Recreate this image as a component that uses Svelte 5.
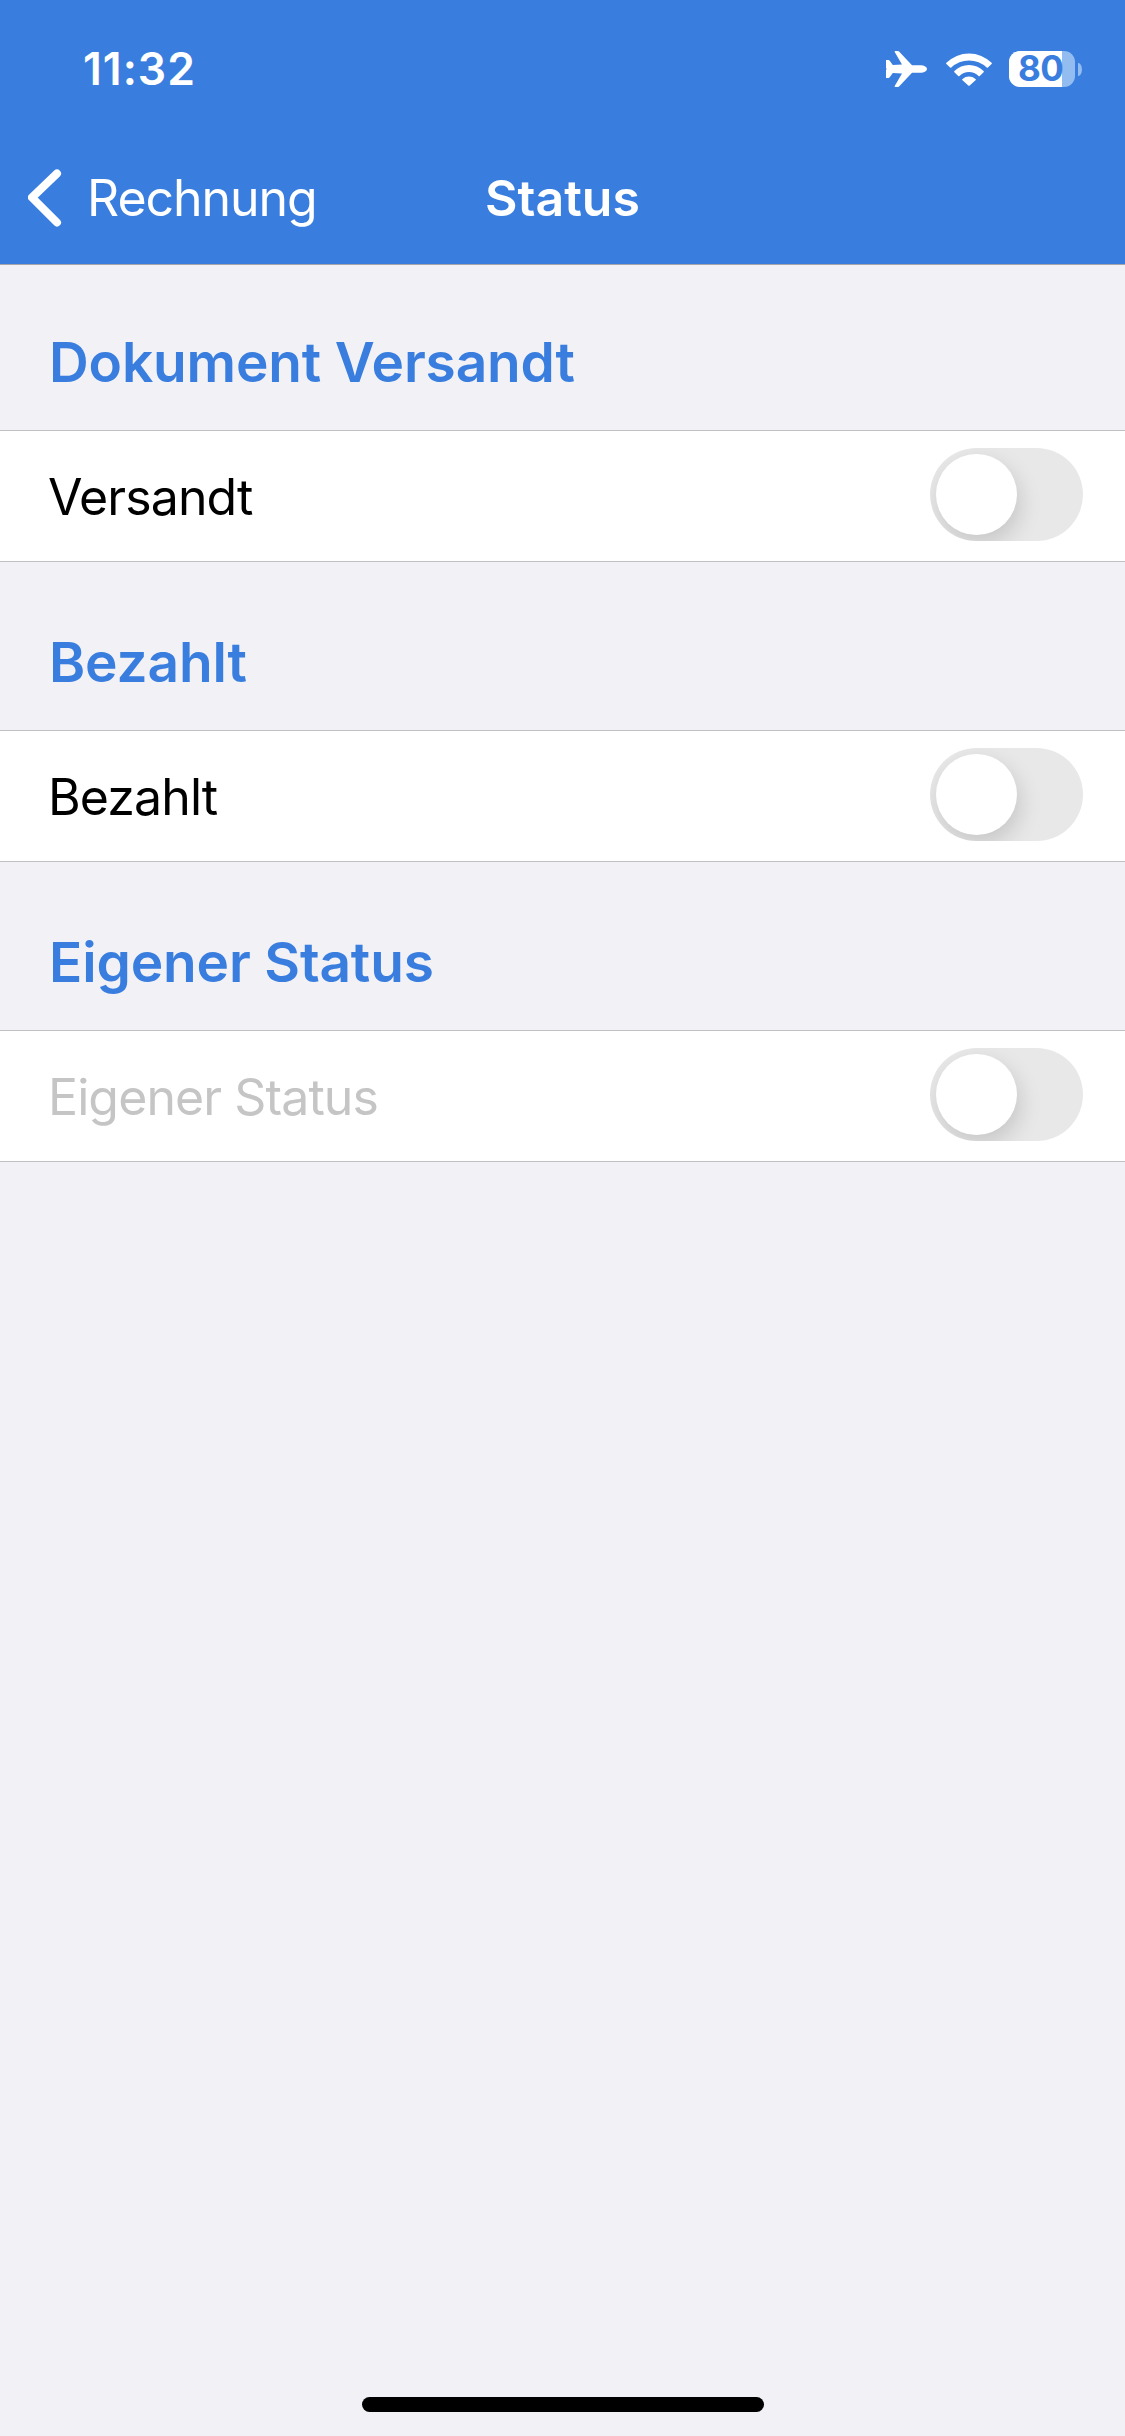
<script lang="ts">
  interface Section {
    id: string;
    title: string;
    label: string;
    placeholder?: boolean;
    on: boolean;
  }

  let sections = $state<Section[]>([
    { id: 'sent', title: 'Dokument Versandt', label: 'Versandt', on: false },
    { id: 'paid', title: 'Bezahlt', label: 'Bezahlt', on: false },
    { id: 'custom', title: 'Eigener Status', label: 'Eigener Status', placeholder: true, on: false },
  ]);

  const battery = 80;
</script>

<div class="screen">
  <header class="top">
    <div class="statusbar">
      <span class="statusbar__time">11:32</span>
      <div class="statusbar__icons">
        <svg class="plane" viewBox="0 0 41 36" aria-hidden="true">
          <path
            d="M0 9h2.4q.8 0 1.3.7L6.8 14L16 13.6L8.7.9Q8.4 0 9.3 0h2.6q.8 0 1.4.7L26 14.2H35.5Q41 15.2 41 18T35.5 21.8H26L13.3 35.3q-.6.7-1.4.7H9.3q-.9 0-.6-.9L16 22.4L6.8 22L3.7 26.3q-.5.7-1.3.7H0V18.8L.8 18L0 17.2Z"
          />
        </svg>
        <svg class="wifi" viewBox="0 0 46 33" aria-hidden="true">
          <path d="M.4 9.8a32 32 0 0 1 45.2 0q.6.6 0 1.2l-3.7 3.6q-.6.5-1.2 0a25.4 25.4 0 0 0-35.4 0q-.6.5-1.2 0L.4 11q-.6-.6 0-1.2Z" />
          <path d="M8.4 18a20.8 20.8 0 0 1 29.2 0q.6.6 0 1.2l-3.8 3.7q-.6.5-1.2 0a14 14 0 0 0-19.2 0q-.6.5-1.2 0l-3.8-3.7q-.6-.6 0-1.2Z" />
          <path d="M16.5 26a9.8 9.8 0 0 1 13 0q.7.7 0 1.3l-5.8 5.3q-.7.7-1.4 0l-5.8-5.3q-.7-.6 0-1.3Z" />
        </svg>
        <div class="battery">
          <div class="battery__body">
            <div class="battery__level" style="width: {battery}%"></div>
            <span class="battery__text">{battery}</span>
          </div>
          <div class="battery__cap"></div>
        </div>
      </div>
    </div>

    <nav class="navbar">
      <button type="button" class="navbar__back">
        <svg viewBox="0 0 34 58" aria-hidden="true">
          <path d="M29 4.5L4 28.5L29 53.5" />
        </svg>
        <span>Rechnung</span>
      </button>
      <h1 class="navbar__title">Status</h1>
    </nav>
  </header>

  <main class="list">
    {#each sections as section (section.id)}
      <section class="group">
        <h2 class="group__title">{section.title}</h2>
        <div class="row">
          <span class="row__label" class:row__label--placeholder={section.placeholder}>
            {section.label}
          </span>
          <button
            type="button"
            class="toggle"
            class:toggle--on={section.on}
            role="switch"
            aria-checked={section.on}
            aria-label={section.label}
            onclick={() => (section.on = !section.on)}
          >
            <span class="toggle__thumb"></span>
          </button>
        </div>
      </section>
    {/each}
  </main>

  <div class="home-indicator"></div>
</div>

<style>
  :global(body) {
    margin: 0;
    background: #f2f1f6;
  }

  .screen {
    --blue: #397ede;
    box-sizing: border-box;
    display: flex;
    flex-direction: column;
    width: 1125px;
    height: 2436px;
    background: #f2f1f6;
    font-family: Inter, 'Liberation Sans', sans-serif;
    color: #000;
  }

  button {
    margin: 0;
    padding: 0;
    border: 0;
    background: none;
    font: inherit;
    color: inherit;
  }

  .top {
    box-sizing: border-box;
    flex: none;
    height: 265px;
    background: var(--blue);
    border-bottom: 1px solid #a5a6ab;
    color: #fff;
  }

  .statusbar {
    box-sizing: border-box;
    display: flex;
    justify-content: space-between;
    height: 132px;
    padding: 39px 43px 0 83px;
  }

  .statusbar__time {
    font-size: 44.5px;
    font-weight: 600;
    line-height: 60px;
    letter-spacing: 1px;
  }

  .statusbar__icons {
    display: flex;
    align-items: center;
    height: 60px;
  }

  .statusbar__icons svg {
    fill: currentColor;
  }

  .plane {
    width: 41px;
    height: 36px;
    margin-right: 19px;
  }

  .wifi {
    width: 46px;
    height: 33px;
    margin-right: 17px;
  }

  .battery {
    display: flex;
    align-items: center;
    gap: 3px;
  }

  .battery__body {
    position: relative;
    width: 66px;
    height: 36px;
    border-radius: 11px;
    background: #93bdf0;
  }

  .battery__level {
    height: 100%;
    border-radius: 11px 0 0 11px;
    background: #fff;
  }

  .battery__text {
    position: absolute;
    top: -5px;
    left: 9px;
    font-size: 35px;
    font-weight: 700;
    line-height: 44px;
    letter-spacing: -0.5px;
    color: var(--blue);
  }

  .battery__cap {
    width: 4px;
    height: 13px;
    border-radius: 0 4px 4px 0 / 0 7px 7px 0;
    background: #93bdf0;
  }

  .navbar {
    display: grid;
    grid-template-columns: 1fr auto 1fr;
    align-items: center;
    height: 132px;
  }

  .navbar__back {
    display: flex;
    align-items: center;
    gap: 25px;
    padding-left: 28px;
    font-size: 50px;
    line-height: 60px;
    letter-spacing: -1.05px;
  }

  .navbar__back svg {
    width: 34px;
    height: 58px;
    fill: none;
    stroke: currentColor;
    stroke-width: 8;
    stroke-linecap: round;
    stroke-linejoin: round;
  }

  .navbar__title {
    margin: 0;
    font-size: 50px;
    font-weight: 600;
    line-height: 60px;
  }

  .list {
    flex: 1;
  }

  .group__title {
    box-sizing: border-box;
    height: 168px;
    margin: 0;
    padding: 68px 0 0 49px;
    font-size: 55px;
    font-weight: 600;
    line-height: 64px;
    letter-spacing: -0.15px;
    color: var(--blue);
  }

  .group:first-child .group__title {
    height: 165px;
    padding-top: 65px;
  }

  .row {
    box-sizing: border-box;
    display: flex;
    justify-content: space-between;
    height: 132px;
    padding: 17px 42px 0 48px;
    background: #fff;
    border: solid #c1c1c5;
    border-width: 1px 0;
  }

  .row__label {
    padding-top: 19px;
    font-size: 50px;
    line-height: 60px;
    letter-spacing: -0.9px;
  }

  .row__label--placeholder {
    color: #c5c5c5;
  }

  .toggle {
    box-sizing: border-box;
    width: 153px;
    height: 93px;
    padding: 6px;
    border-radius: 47px;
    background: #e8e8e8;
    overflow: hidden;
  }

  .toggle__thumb {
    display: block;
    width: 81px;
    height: 81px;
    border-radius: 50%;
    background: #fff;
    box-shadow: 3px 9px 22px rgba(0, 0, 0, 0.15);
  }

  .toggle--on {
    background: var(--blue);
  }

  .toggle--on .toggle__thumb {
    margin-left: auto;
  }

  .home-indicator {
    flex: none;
    align-self: center;
    width: 402px;
    height: 15px;
    margin-bottom: 24px;
    border-radius: 8px;
    background: #000;
  }
</style>
